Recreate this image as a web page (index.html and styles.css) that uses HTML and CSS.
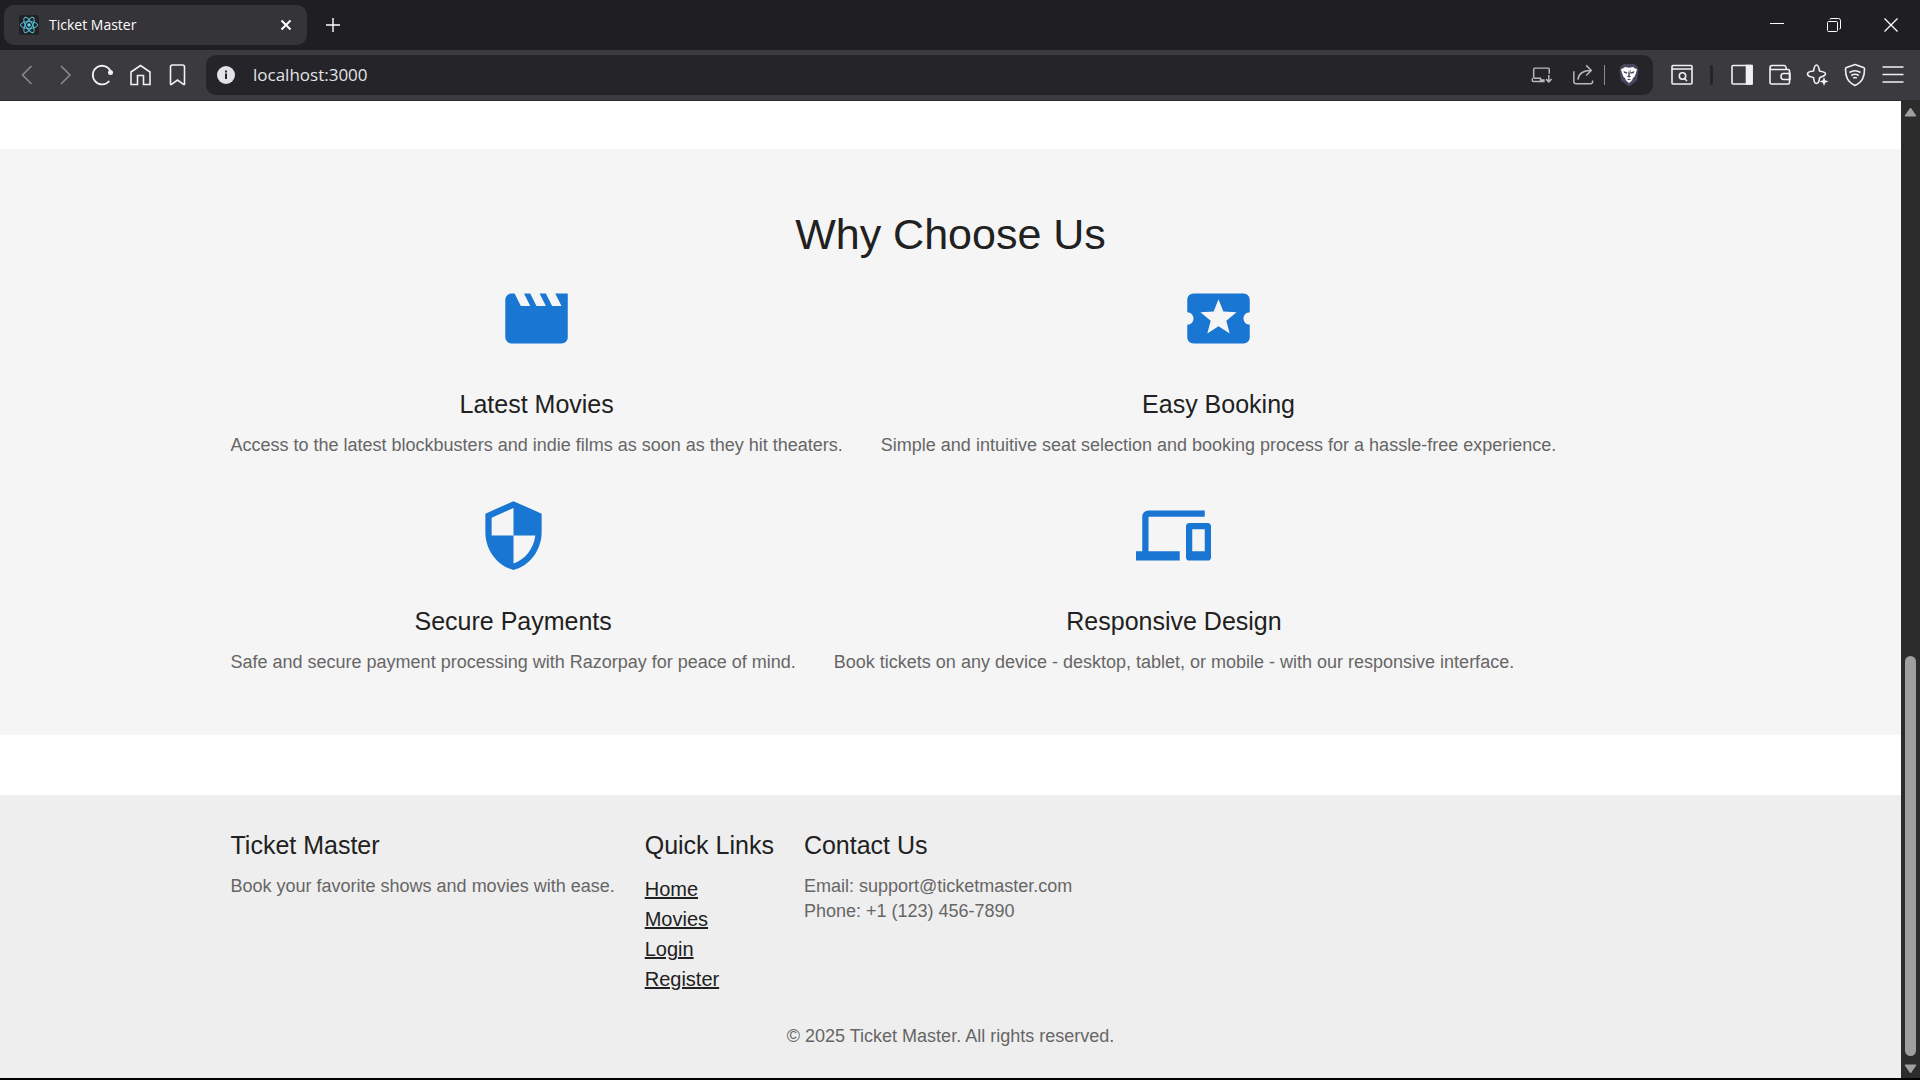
FILE: index.html
```html
<!DOCTYPE html>
<html lang="en">
<head>
<meta charset="utf-8">
<meta name="viewport" content="width=device-width, initial-scale=1">
<title>Ticket Master</title>
<link rel="stylesheet" href="styles.css">
</head>
<body>
<div class="browser">
  <div class="tabstrip">
    <div class="tab">
      <svg class="favicon" viewBox="0 0 20 20" aria-hidden="true">
        <rect width="20" height="20" rx="2" fill="#222"/>
        <g fill="none" stroke="#53c1de" stroke-width="1">
          <ellipse cx="10" cy="10" rx="8.6" ry="3.4"/>
          <ellipse cx="10" cy="10" rx="8.6" ry="3.4" transform="rotate(60 10 10)"/>
          <ellipse cx="10" cy="10" rx="8.6" ry="3.4" transform="rotate(120 10 10)"/>
        </g>
        <circle cx="10" cy="10" r="1.7" fill="#61dafb"/>
      </svg>
      <span class="tab-title">Ticket Master</span>
      <button class="tab-close" type="button" aria-label="Close tab">
        <svg viewBox="0 0 12 12"><path d="M1.5 1.5l9 9M10.500 1.500l-9 9" stroke-width="2"/></svg>
      </button>
    </div>
    <button class="new-tab" type="button" aria-label="New tab">
      <svg viewBox="0 0 14 14"><path d="M7 0v14M0 7h14" stroke-width="1.4"/></svg>
    </button>
    <div class="window-controls">
      <button type="button" aria-label="Minimize"><svg viewBox="0 0 14 14"><path d="M0 5.500h14"/></svg></button>
      <button type="button" aria-label="Restore"><svg viewBox="0 0 14 14"><rect x=".5" y="3.500" width="10" height="10" rx="1"/><path d="M3 1.500q0-1 1-1h7.500q2 0 2 2V10q0 1-1 1"/></svg></button>
      <button type="button" aria-label="Close window"><svg viewBox="0 0 14 14"><path d="M.5.5l13 13M13.500.5l-13 13" stroke-width="1.3"/></svg></button>
    </div>
  </div>

  <div class="toolbar">
    <div class="nav-buttons">
      <button class="tool dim" type="button" aria-label="Back"><svg viewBox="0 0 24 24"><path d="M16.500 3L7.500 12l9 9"/></svg></button>
      <button class="tool dim" type="button" aria-label="Forward"><svg viewBox="0 0 24 24"><path d="M8 3l9 9-9 9"/></svg></button>
      <button class="tool" type="button" aria-label="Reload"><svg viewBox="0 0 24 24"><path d="M19.500 8A9.300 9.300 0 1 0 18.300 18" stroke-width="1.8"/><circle cx="19.500" cy="9.500" r="2.500" class="solid" stroke="none"/></svg></button>
      <button class="tool" type="button" aria-label="Home"><svg viewBox="0 0 24 24"><path d="M2 21.500V9L11.500 2.500 21 9v12.500h-6.500v-9H8.500v9z"/></svg></button>
      <button class="tool" type="button" aria-label="Bookmark"><svg viewBox="0 0 24 24"><path d="M3.500 21V4q0-2 2-2h10q2 0 2 2v17q0 1-1 .4L10.500 17l-6 4.400q-1 .6-1-.4z"/></svg></button>
    </div>
    <form class="address">
      <svg class="info" viewBox="0 0 18 18" aria-hidden="true"><circle cx="9" cy="9" r="9"/><path d="M8 7.500h2V13H8zM8 4.500h2v2H8z"/></svg>
      <input class="url" type="text" value="localhost:3000" aria-label="Address">
      <button class="tool soft" type="button" aria-label="Install app"><svg viewBox="0 0 24 24"><path d="M4 15.500V5.500q0-1 1-1h15q1 0 1 1v5M4 15.500h7.500v2H16M2.500 15.500v2.500q0 1 1 1H16M20.500 12v7M17.500 16.500l3 3 3-3"/></svg></button>
      <button class="tool soft" type="button" aria-label="Share"><svg viewBox="0 0 24 24"><path d="M2 8v11q0 2.500 2.500 2.500h15.500q2.500 0 2.500-2.500v-1M6.500 17Q7.500 7 20.500 7M15.500 1.500L21 7l-5.500 5.500"/></svg></button>
      <span class="address-divider"></span>
      <button class="tool shields" type="button" aria-label="Shields"><svg viewBox="0 0 24 24"><path class="shield-back" d="M7 1h10l3.500 2.500 1 4-1.500 10L12 23.500 4 17.500 2.500 7.500l1-4z"/><path class="lion" d="M8 4l4 .7L16 4l2 1.500 2 .5-.7 3-1.600 4.500-1.700 1.500-1 2.500L12 20l-3-2.500L8 15l-1.700-1.500L4.700 9 4 6l2-.5z"/><path class="face" d="M6.500 8l4 1.500-1 1.200-2.500-1zM17.500 8l-4 1.500 1 1.200 2.500-1zM10.500 6.500l.8 1v5l-1.300 1.200 2 .8 2-.8-1.300-1.200v-5l.8-1v5M9.800 16.500l2.200-.8 2.200.8-2.200.8z"/></svg></button>
    </form>
    <div class="extras">
      <button class="tool" type="button" aria-label="Search tabs"><svg viewBox="0 0 24 24"><rect x="2" y="2.500" width="20" height="18.500" rx="1"/><path d="M2 6h20M14.500 15.500L17 18"/><circle cx="12.500" cy="13" r="3.200"/></svg></button>
      <span class="extras-divider"></span>
      <button class="tool" type="button" aria-label="Sidebar"><svg viewBox="0 0 24 24"><rect x="3" y="2.500" width="20" height="18.500" rx="1"/><path class="solid" d="M17.500 2.500H23V21h-5.500z"/></svg></button>
      <button class="tool" type="button" aria-label="Wallet"><svg viewBox="0 0 24 24"><path d="M3 5v14.500q0 1.500 1.500 1.500H21q1.500 0 1.500-1.500V8q0-1.500-1.500-1.500H4.500Q3 6.500 3 5q0-2.500 2-2.500h12q2 0 2.500 4M23 10.500h-6.500q-2.500 0-2.500 3t2.500 3H23z"/></svg></button>
      <button class="tool" type="button" aria-label="Assistant"><svg viewBox="0 0 24 24"><path d="M16 14L14.500 15Q14 20.500 11.500 20.500T8.500 14.500Q2.500 13.500 2.500 11T8.500 8Q9.500 2 11.500 2t3 6Q20.500 9 20.500 11q0 1.500-4.500 3z"/><path class="solid" d="M19 14l1.200 3.300 3.300 1.200-3.300 1.200L19 23l-1.200-3.300-3.300-1.200 3.300-1.200z" stroke="none"/></svg></button>
      <button class="tool" type="button" aria-label="VPN"><svg viewBox="0 0 24 24"><path d="M12 1.500l8.500 3q1 .4 1 1.500c0 8-2 13-9.500 16.500C4.500 19 2.500 14 2.500 6q0-1.100 1-1.500zM6.500 9.500q5.500-3.600 11 0M8.300 12.500q3.700-2.600 7.400 0M10.200 15.200q1.800-1.300 3.600 0"/></svg></button>
      <button class="tool" type="button" aria-label="Menu"><svg viewBox="0 0 24 24"><path d="M1.500 4h21M1.500 11.500h21M1.500 19h21"/></svg></button>
    </div>
  </div>

  <div class="viewport">
    <div class="page">
      <main>
        <section class="features">
          <div class="container">
            <h2 class="features-title">Why Choose Us</h2>
            <div class="feature-list">
              <article class="feature">
                <svg class="feature-icon" viewBox="0 0 24 24" aria-hidden="true"><path d="M18 4l2 4h-3l-2-4h-2l2 4h-3l-2-4H8l2 4H7L5 4H4c-1.100 0-1.990.9-1.990 2L2 18c0 1.100.9 2 2 2h16c1.100 0 2-.9 2-2V4h-4z"/></svg>
                <h3 class="heading">Latest Movies</h3>
                <p class="copy">Access to the latest blockbusters and indie films as soon as they hit theaters.</p>
              </article>
              <article class="feature">
                <svg class="feature-icon" viewBox="0 0 24 24" aria-hidden="true"><path d="M20 12c0-1.100.9-2 2-2V6c0-1.100-.9-2-2-2H4c-1.100 0-1.990.9-1.990 2v4c1.100 0 1.990.9 1.990 2s-.89 2-2 2v4c0 1.100.9 2 2 2h16c1.100 0 2-.9 2-2v-4c-1.100 0-2-.9-2-2zm-4.420 4.800L12 14.500l-3.580 2.300 1.080-4.120-3.290-2.690 4.240-.25L12 5.800l1.540 3.950 4.240.25-3.290 2.690 1.090 4.110z"/></svg>
                <h3 class="heading">Easy Booking</h3>
                <p class="copy">Simple and intuitive seat selection and booking process for a hassle-free experience.</p>
              </article>
              <article class="feature">
                <svg class="feature-icon" viewBox="0 0 24 24" aria-hidden="true"><path d="M12 1L3 5v6c0 5.550 3.840 10.740 9 12 5.160-1.260 9-6.450 9-12V5l-9-4zm0 10.990h7c-.53 4.120-3.280 7.790-7 8.940V12H5V6.300l7-3.110v8.800z"/></svg>
                <h3 class="heading">Secure Payments</h3>
                <p class="copy">Safe and secure payment processing with Razorpay for peace of mind.</p>
              </article>
              <article class="feature">
                <svg class="feature-icon" viewBox="0 0 24 24" aria-hidden="true"><path d="M4 6h18V4H4c-1.100 0-2 .9-2 2v11H0v3h14v-3H4V6zm19 2h-6c-.55 0-1 .45-1 1v10c0 .55.45 1 1 1h6c.55 0 1-.45 1-1V9c0-.55-.45-1-1-1zm-1 9h-4v-7h4v7z"/></svg>
                <h3 class="heading">Responsive Design</h3>
                <p class="copy">Book tickets on any device - desktop, tablet, or mobile - with our responsive interface.</p>
              </article>
            </div>
          </div>
        </section>
      </main>
      <footer class="footer">
        <div class="container">
          <div class="footer-columns">
            <div>
              <h3 class="heading">Ticket Master</h3>
              <p class="copy">Book your favorite shows and movies with ease.</p>
            </div>
            <nav aria-labelledby="quick-links">
              <h3 class="heading" id="quick-links">Quick Links</h3>
              <ul class="links">
                <li><a href="#home">Home</a></li>
                <li><a href="#movies">Movies</a></li>
                <li><a href="#login">Login</a></li>
                <li><a href="#register">Register</a></li>
              </ul>
            </nav>
            <div>
              <h3 class="heading">Contact Us</h3>
              <p class="copy">Email: support@ticketmaster.com</p>
              <p class="copy">Phone: +1 (123) 456-7890</p>
            </div>
          </div>
          <p class="copy copyright">© 2025 Ticket Master. All rights reserved.</p>
        </div>
      </footer>
    </div>
    <div class="scrollbar" aria-hidden="true">
      <svg class="arrow" viewBox="0 0 13 10"><path d="M6.500 1L12 9H1z"/></svg>
      <div class="track"><div class="thumb"></div></div>
      <svg class="arrow" viewBox="0 0 13 10"><path d="M6.500 9L12 1H1z"/></svg>
    </div>
  </div>
</div>
</body>
</html>
```
FILE: styles.css
```css
* {
  box-sizing: border-box;
}

body {
  margin: 0;
  background: #000;
  color: #212121;
  font-family: "Liberation Sans", Arial, sans-serif;
}

h2, h3, p, ul {
  margin: 0;
  padding: 0;
  font-weight: 400;
}

button {
  display: flex;
  align-items: center;
  justify-content: center;
  flex: none;
  padding: 0;
  border: 0;
  background: none;
  color: inherit;
}

button svg {
  fill: none;
  stroke: currentColor;
}

.browser {
  display: flex;
  flex-direction: column;
  min-height: 100vh;
  padding-bottom: 2px;
}

/* Tab strip */

.tabstrip {
  display: flex;
  height: 50px;
  background: #1f1e23;
  color: #fff;
}

.tab {
  display: flex;
  align-items: center;
  width: 303px;
  height: 40px;
  margin: 5px 0 0 4px;
  padding: 0 15px;
  border-radius: 10px;
  background: #353438;
}

.favicon {
  width: 20px;
  height: 20px;
}

.tab-title {
  flex: 1;
  margin-left: 10px;
  font: 14px/20px "Open Sans", "Noto Sans", sans-serif;
}

.tab-close svg {
  width: 12px;
  height: 12px;
}

.new-tab {
  width: 40px;
  margin-left: 6px;
}

.new-tab svg,
.window-controls svg {
  width: 14px;
  height: 14px;
}

.window-controls {
  display: flex;
  margin: 0 1px 0 auto;
}

.window-controls button {
  width: 57px;
}

/* Toolbar */

.toolbar {
  display: flex;
  align-items: center;
  height: 51px;
  padding: 0 8px;
  border-bottom: 1px solid #2b2a2e;
  background: #3b3a3f;
  color: #f1f1f3;
}

.nav-buttons,
.extras {
  display: flex;
  align-items: center;
}

.tool {
  width: 38px;
  height: 38px;
}

.tool svg {
  width: 24px;
  height: 24px;
  stroke-width: 1.6;
}

.tool .solid {
  fill: currentColor;
}

.dim {
  color: #8a898d;
}

.address {
  display: flex;
  flex: 1;
  align-items: center;
  height: 40px;
  margin: 0 10px 0 8px;
  padding: 0 5px 0 11px;
  border-radius: 10px;
  background: #252429;
}

.info {
  flex: none;
  width: 18px;
  height: 18px;
  fill: #e3e2e8;
}

.info path {
  fill: #252429;
}

.url {
  flex: 1;
  min-width: 0;
  margin-left: 18px;
  padding: 0;
  border: 0;
  background: none;
  color: #e4e3e7;
  font: 17px/24px "Open Sans", "Noto Sans", sans-serif;
}

.soft {
  width: 42px;
  color: #b9b8bd;
}

.soft svg {
  width: 22px;
  height: 22px;
}

.address-divider {
  width: 1px;
  height: 20px;
  margin-right: 5px;
  background: #8a898d;
}

.shields svg {
  stroke: none;
}

.shield-back {
  fill: #484760;
}

.lion {
  fill: #fff;
}

.face {
  fill: #484760;
}

.extras-divider {
  width: 3px;
  height: 20px;
  margin: 0 9px;
  border-radius: 2px;
  background: #252429;
}

/* Page */

.viewport {
  display: flex;
  flex: 1;
}

.page {
  display: flex;
  flex: 1;
  flex-direction: column;
  min-width: 0;
  background: #fff;
}

main {
  padding: 48px 0 60px;
}

.container {
  max-width: 1500px;
  margin: 0 auto;
  padding: 0 30px;
}

.features {
  padding: 60px 0;
  background: #f5f5f5;
}

.features-title {
  margin-bottom: 21px;
  font-size: 43px;
  line-height: 51px;
  text-align: center;
}

.feature-list {
  display: flex;
  flex-wrap: wrap;
  gap: 40px 38px;
}

.feature {
  display: flex;
  flex-direction: column;
  align-items: center;
}

.feature-icon {
  width: 75px;
  height: 75px;
  margin-bottom: 28px;
  fill: #1976d2;
}

.heading {
  margin-bottom: 9px;
  font-size: 25px;
  line-height: 40px;
}

.copy {
  color: #666;
  font-size: 18px;
  line-height: 25px;
}

/* Footer */

.footer {
  flex: 1;
  padding: 30px 0 28px;
  background: #eee;
}

.footer-columns {
  display: flex;
  flex-wrap: wrap;
  gap: 30px;
}

.links {
  list-style: none;
}

.links li {
  font-size: 20px;
  line-height: 30px;
}

.links a {
  color: inherit;
}

.copyright {
  margin-top: 30px;
  text-align: center;
}

/* Scrollbar */

.scrollbar {
  display: flex;
  flex-direction: column;
  align-items: center;
  width: 19px;
  padding: 6px 0 4px;
  background: #2c2c2c;
}

.arrow {
  flex: none;
  width: 13px;
  height: 10px;
  fill: #9f9f9f;
  stroke: #9f9f9f;
  stroke-linejoin: round;
}

.track {
  display: flex;
  flex: 1;
  flex-direction: column;
  justify-content: flex-end;
  width: 11px;
  padding: 8px 0;
}

.thumb {
  height: 43%;
  border-radius: 6px;
  background: #9f9f9f;
}
```
